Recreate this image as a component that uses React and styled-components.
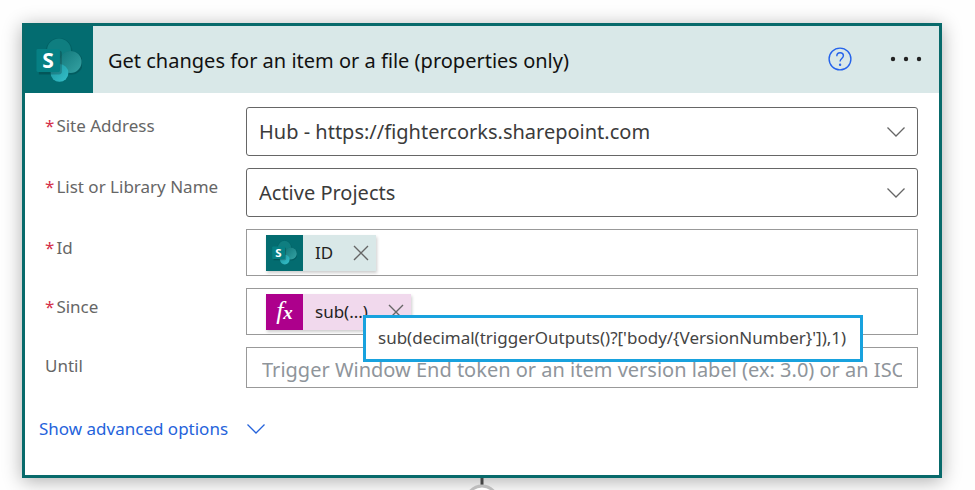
import React from "react";
import styled, { createGlobalStyle } from "styled-components";

const teal = "#036c70";

const GlobalStyle = createGlobalStyle`
  *, *::before, *::after { box-sizing: border-box; }
  body { margin: 0; background: #fefefe; }
  body, button, input, select {
    font-family: "Noto Sans", "Open Sans", sans-serif;
  }
`;

const Page = styled.main`
  display: flex;
  flex-direction: column;
  height: 100vh;
  overflow: hidden;
  padding: 23px 33px 0 22px;
`;

const Card = styled.section`
  flex: none;
  background: #fff;
  border: 3px solid #086a6b;
  box-shadow: 0 3px 18px rgba(0, 0, 0, 0.32);
`;

const Header = styled.header`
  display: flex;
  align-items: center;
  background: #d9e8e8;
  padding-right: 13px;
`;

const Brand = styled.div`
  display: grid;
  place-items: center;
  width: ${(p) => (p.$small ? "37px" : "68px")};
  height: ${(p) => (p.$small ? "36px" : "67px")};
  background: ${(p) => p.$color || teal};
`;

const Title = styled.h1`
  flex: 1;
  margin: 0;
  padding: 3px 0 0 15px;
  font-size: 20px;
  line-height: 28px;
  font-weight: 400;
  color: #111;
`;

const IconButton = styled.button`
  display: grid;
  place-items: center;
  padding: 0;
  border: 0;
  background: none;
  color: ${(p) => p.$color || "#444"};
  width: ${(p) => p.$width || "24px"};
  height: 24px;
  cursor: pointer;
`;

const HeaderActions = styled.div`
  display: flex;
  align-items: center;
  gap: 34px;
  padding-bottom: 2px;
`;

const Form = styled.form`
  display: grid;
  gap: 12px;
  padding: 14px 21px 0 20px;
`;

const Row = styled.div`
  display: grid;
  grid-template-columns: 201px 1fr;
  align-items: start;
`;

const Label = styled.label`
  display: flex;
  gap: 2px;
  padding-top: 6px;
  font-size: 17px;
  line-height: 26px;
  color: #666;
`;

const Required = styled.span`
  color: #d5304a;
`;

const SelectBox = styled.div`
  display: grid;
  align-items: center;

  & > * { grid-area: 1 / 1; }
  & > svg { justify-self: end; margin-right: 12px; pointer-events: none; color: #666; }
`;

const Select = styled.select`
  appearance: none;
  width: 100%;
  height: 49px;
  padding: 0 44px 0 12px;
  border: 1px solid #666;
  border-radius: 3px;
  background: #fff;
  color: #3b3b3b;
  font-size: 20px;
`;

const TokenField = styled.div`
  position: relative;
  display: flex;
  align-items: center;
  height: 47px;
  padding-left: 19px;
  border: 1px solid #999;
`;

const Token = styled.span`
  display: flex;
  align-items: center;
  background: ${(p) => p.$color};
  box-shadow: 1px 2px 3px rgba(0, 0, 0, 0.2);
  color: #222;
  font-size: 17px;
  line-height: 36px;
`;

const TokenText = styled.span`
  padding: 0 13px 0 12px;
`;

const FxSymbol = styled.span`
  font-family: "Liberation Serif", serif;
  font-style: italic;
  font-size: 26px;
  line-height: 30px;
  color: #fff;
`;

const FxVariable = styled.span`
  font-size: 19px;
  font-weight: 700;
`;

const TokenInput = styled.input`
  flex: 1;
  min-width: 0;
  height: 36px;
  border: 0;
  outline: 0;
  background: none;
  font-size: 20px;
`;

const TextInput = styled.input`
  width: 100%;
  height: 41px;
  padding: 4px 15px 0;
  border: 1px solid #999;
  font-size: 20px;
  color: #3b3b3b;
  &::placeholder { color: #8f959b; opacity: 1; }
`;

const Tooltip = styled.div`
  position: absolute;
  z-index: 1;
  top: 26px;
  left: 116px;
  padding: 7px 14px 8px 12px;
  border: 3px solid #18a2de;
  background: #fff;
  color: #444;
  font-size: 17px;
  line-height: 26px;
  white-space: nowrap;
`;

const Advanced = styled.button`
  display: flex;
  align-items: center;
  gap: 18px;
  margin: 27px 0 32px 14px;
  padding: 0;
  border: 0;
  background: none;
  color: #2563db;
  font-size: 17px;
  line-height: 28px;
  cursor: pointer;
`;

const Connector = styled.div`
  display: flex;
  flex-direction: column;
  align-items: center;
  position: relative;
`;

const LogoLetter = styled.text`
  font-family: "Open Sans", sans-serif;
  font-size: 22px;
  font-weight: 700;
  fill: #fff;
`;

function SharePointIcon({ size }) {
  return (
    <svg width={size} height={size} viewBox="0 0 48 48" aria-hidden="true">
      <defs>
        <linearGradient id="spMid" x1="0" y1="0" x2="1" y2="1">
          <stop offset="0" stopColor="#11777a" />
          <stop offset="1" stopColor="#36a3a4" />
        </linearGradient>
        <linearGradient id="spLow" x1="0" y1="0" x2="1" y2="1">
          <stop offset="0" stopColor="#1a969e" />
          <stop offset="1" stopColor="#36c0ca" />
        </linearGradient>
      </defs>
      <circle cx="24" cy="15" r="14" fill="#000" opacity="0.1" />
      <circle cx="24" cy="14" r="12.500" fill="#0f7e80" />
      <circle cx="36.500" cy="27" r="12.500" fill="#000" opacity="0.14" />
      <circle cx="36" cy="26" r="11.500" fill="url(#spMid)" />
      <circle cx="24.500" cy="37.500" r="9.300" fill="url(#spLow)" />
      <path d="M3 14h21a3 3 0 0 1 3 3v20a3 3 0 0 1-3 2H3z" fill="#000" opacity="0.2" />
      <rect x="0.500" y="12.500" width="24.500" height="24" rx="1.500" fill="#068084" />
      <LogoLetter x="12.500" y="32" textAnchor="middle">S</LogoLetter>
    </svg>
  );
}

function Chevron() {
  return (
    <svg width="20" height="12" viewBox="0 0 20 12" fill="none" stroke="currentColor" strokeWidth="1.300" aria-hidden="true">
      <path d="M1.500 1.500 10 10l8.500-8.500" />
    </svg>
  );
}

function RemoveButton({ name }) {
  return (
    <IconButton type="button" aria-label={"Remove " + name} $width="30px" $color="#666">
      <svg width="16" height="16" viewBox="0 0 16 16" fill="none" stroke="currentColor" strokeWidth="1.400" aria-hidden="true">
        <path d="m1 1 14 14M15 1 1 15" />
      </svg>
    </IconButton>
  );
}

function Field({ id, label, required, children }) {
  return (
    <Row>
      <Label htmlFor={id}>
        {required && <Required>*</Required>}
        {label}
      </Label>
      {children}
    </Row>
  );
}

function SelectField({ id, label, value }) {
  return (
    <Field id={id} label={label} required>
      <SelectBox>
        <Select id={id} defaultValue={value}>
          <option>{value}</option>
        </Select>
        <Chevron />
      </SelectBox>
    </Field>
  );
}

export default function App() {
  return (
    <>
      <GlobalStyle />
      <Page>
        <Card>
          <Header>
            <Brand>
              <SharePointIcon size={46} />
            </Brand>
            <Title>Get changes for an item or a file (properties only)</Title>
            <HeaderActions>
              <IconButton type="button" aria-label="Help" $color="#2563eb">
                <svg width="24" height="24" viewBox="0 0 24 24" fill="none" stroke="currentColor" strokeWidth="1.400" aria-hidden="true">
                  <circle cx="12" cy="12" r="10.900" />
                  <path d="M8.800 9.300c0-2.200 1.300-3.500 3.300-3.500s3.300 1.200 3.300 3c0 2.600-3.300 3-3.300 5.700" />
                  <circle cx="12.100" cy="17.800" r="0.500" fill="currentColor" />
                </svg>
              </IconButton>
              <IconButton type="button" aria-label="More options" $width="40px" $color="#222">
                <svg width="32" height="6" viewBox="0 0 32 6" fill="currentColor" aria-hidden="true">
                  <circle cx="3" cy="3" r="2.200" />
                  <circle cx="16" cy="3" r="2.200" />
                  <circle cx="29" cy="3" r="2.200" />
                </svg>
              </IconButton>
            </HeaderActions>
          </Header>
          <Form>
            <SelectField id="site" label="Site Address" value="Hub - https://fightercorks.sharepoint.com" />
            <SelectField id="list" label="List or Library Name" value="Active Projects" />
            <Field id="item" label="Id" required>
              <TokenField>
                <Token $color="#d9e8e8">
                  <Brand as="span" $small>
                    <SharePointIcon size={25} />
                  </Brand>
                  <TokenText>ID</TokenText>
                  <RemoveButton name="ID" />
                </Token>
                <TokenInput id="item" />
              </TokenField>
            </Field>
            <Field id="since" label="Since" required>
              <TokenField>
                <Token $color="#f1d9ed">
                  <Brand as="span" $small $color="#ad008c">
                    <FxSymbol>
                      f<FxVariable>x</FxVariable>
                    </FxSymbol>
                  </Brand>
                  <TokenText>sub(...)</TokenText>
                  <RemoveButton name="sub" />
                </Token>
                <TokenInput id="since" />
                <Tooltip role="tooltip">{"sub(decimal(triggerOutputs()?['body/{VersionNumber}']),1)"}</Tooltip>
              </TokenField>
            </Field>
            <Field id="until" label="Until">
              <TextInput id="until" placeholder="Trigger Window End token or an item version label (ex: 3.0) or an ISO 8601 timestamp" />
            </Field>
          </Form>
          <Advanced type="button">
            Show advanced options
            <Chevron />
          </Advanced>
        </Card>
        <Connector>
          <svg width="36" height="42" viewBox="0 0 36 42" aria-hidden="true">
            <path d="M18 0v7" stroke="#444" strokeWidth="3" />
            <circle cx="18" cy="24" r="16" fill="#fff" stroke="#bdbdbd" strokeWidth="3" />
          </svg>
        </Connector>
      </Page>
    </>
  );
}
